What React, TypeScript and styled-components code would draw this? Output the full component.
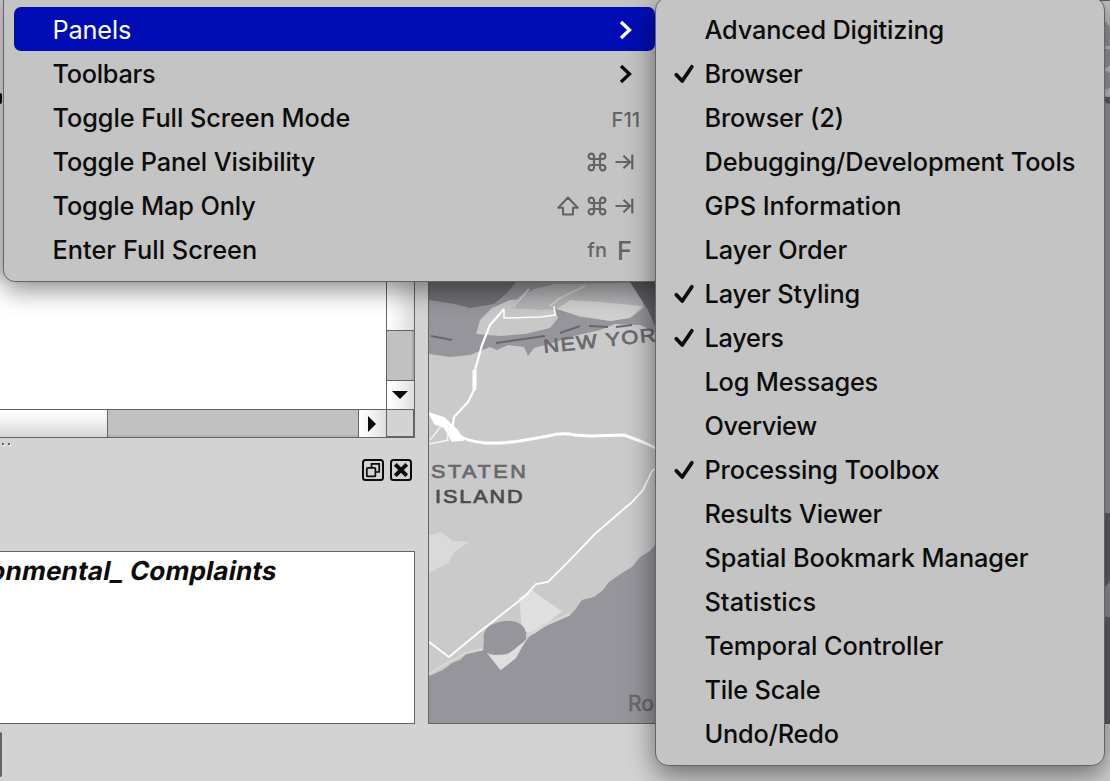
import React from 'react';
import styled, { createGlobalStyle } from 'styled-components';

const GlobalStyle = createGlobalStyle`
  * { box-sizing: border-box; }
  body { margin: 0; background: #d3d3d3; font-family: Inter, "Liberation Sans", sans-serif; }
`;

const Page = styled.div`
  position: relative;
  display: flex;
  width: 1110px;
  height: 781px;
  overflow: hidden;
  background: #d3d3d3;
`;

const Dock = styled.div`
  display: flex;
  flex-direction: column;
  width: 415px;
  margin-right: 13px;
`;

const TreePanel = styled.div`
  display: grid;
  grid-template-columns: 386px 29px;
  grid-template-rows: 409px 28px;
  height: 438px;
  border-bottom: 1px solid #646464;
`;

const TreeBody = styled.div`
  padding-top: 93px;
  background: linear-gradient(#dcdcdc 270px, #fff 285px);
`;

const ScrollNub = styled.div`
  width: 2px;
  height: 11px;
  border-radius: 0 2px 2px 0;
  background: #0c0c0c;
`;

const VerticalBar = styled.div`
  display: flex;
  flex-direction: column;
  border-left: 1px solid #646464;
  border-right: 1px solid #646464;
`;

const VerticalTrack = styled.div`
  height: 330px;
  background: linear-gradient(90deg, #fff, #ebebeb 60%, #dadada);
`;

const VerticalThumb = styled.div`
  height: 51px;
  border: solid #646464;
  border-width: 1px 0;
  background: #c1c1c1;
  box-shadow: inset -2px 0 0 #aaa;
`;

const ArrowButton = styled.div<{ $width?: number }>`
  display: flex;
  flex: ${(p) => (p.$width ? 'none' : 1)};
  width: ${(p) => (p.$width ? `${p.$width}px` : 'auto')};
  align-items: center;
  justify-content: center;
  padding-right: 2px;
  background: linear-gradient(90deg, #fff, #f2f2f2 50%, #dedede);
`;

const HorizontalBar = styled.div`
  display: flex;
  border-top: 1px solid #646464;
`;

const HorizontalTrack = styled.div`
  width: 107px;
  background: linear-gradient(#fff, #f0f0f0 45%, #d6d6d6);
`;

const HorizontalThumb = styled.div`
  width: 252px;
  border: solid #646464;
  border-width: 0 1px;
  background: #c1c1c1;
  box-shadow: inset 0 -2px 0 #b2b2b2;
`;

const Corner = styled.div`
  border: 1px solid #646464;
  border-right-width: 2px;
  background: #d3d3d3;
`;

const Grip = styled.div`
  display: flex;
  gap: 4px;
  height: 21px;
  padding: 5px 0 0 2px;
`;

const GripDot = styled.span`
  width: 2px;
  height: 2px;
  background: #646464;
  box-shadow: 1px 1px 0 #fff;
`;

const DockTitle = styled.div`
  display: flex;
  justify-content: flex-end;
  gap: 6px;
  height: 92px;
  padding-right: 3px;
`;

const LayerList = styled.div`
  height: 173px;
  overflow: hidden;
  border: 1px solid #646464;
  border-left: 0;
  background: #fff;
`;

const LayerName = styled.div`
  margin: 3px 0 0 -12px;
  color: #0c0c0c;
  font-size: 26px;
  font-weight: 700;
  line-height: 32px;
  letter-spacing: 0.22px;
  white-space: pre;
  transform: skewX(-11deg);
  transform-origin: 0 80%;
`;

const SideButton = styled.div`
  width: 2px;
  height: 45px;
  margin-top: 8px;
  border-radius: 0 2px 2px 0;
  background: #646464;
`;

const MapFrame = styled.div`
  flex: 1;
  height: 724px;
  border: 1px solid #646464;
  border-right: 0;

  svg { display: block; }
`;

const Menu = styled.div`
  position: absolute;
  border: 1px solid #646464;
  background: #c4c4c4;
`;

const ViewMenu = styled(Menu)`
  top: -20px;
  left: 3px;
  width: 663px;
  height: 302px;
  padding: 26px 10px 0;
  border-radius: 12px;
  box-shadow: 0 9px 24px rgba(0, 0, 0, 0.42);
`;

const PanelsMenu = styled(Menu)`
  top: -3px;
  left: 655px;
  width: 450px;
  height: 769px;
  padding: 9px 10px 0;
  border-radius: 13px;
  box-shadow: 0 9px 28px rgba(0, 0, 0, 0.5);
`;

const Item = styled.div<{ $active?: boolean }>`
  display: flex;
  align-items: center;
  width: 641px;
  height: 44px;
  padding: 2px 20px 0 38.5px;
  border-radius: 7px;
  background: ${(p) => (p.$active ? '#000db4' : 'transparent')};
  color: ${(p) => (p.$active ? '#fff' : '#0c0c0c')};
  font-weight: ${(p) => (p.$active ? 430 : 500)};
`;

const PanelItem = styled.div`
  display: flex;
  align-items: center;
  height: 44px;
  padding-top: 2px;
  color: #0c0c0c;
  font-weight: 500;
`;

const CheckSlot = styled.span`
  display: flex;
  width: 38.5px;
  padding-left: 7px;
`;

const Label = styled.span<{ $tracking?: number }>`
  font-size: 25.3px;
  line-height: 42px;
  letter-spacing: ${(p) => p.$tracking ?? 0}px;
  white-space: nowrap;
`;

const Shortcut = styled.span`
  display: flex;
  align-items: center;
  gap: 8px;
  margin-left: auto;
  color: #646464;
`;

const FunctionKey = styled.span`
  margin-right: -5px;
  padding-top: 3px;
  font-size: 20px;
`;

const ModifierKey = styled.span`
  font-size: 20px;
`;

const LetterKey = styled.span`
  padding: 0 3px 0 2px;
  font-size: 25.5px;
`;

const Arrow = styled.span`
  display: flex;
  margin-left: auto;
  padding-right: 2px;
`;

const Chevron = () => (
  <Arrow>
    <svg width="14" height="20" viewBox="0 0 14 20" fill="none" stroke="currentColor" strokeWidth="3.3">
      <path d="M2 2 10.5 10 2 18" />
    </svg>
  </Arrow>
);

const Check = () => (
  <svg width="22" height="20" viewBox="0 0 22 20" fill="none" stroke="currentColor" strokeWidth="3.8" strokeLinecap="round" strokeLinejoin="round">
    <path d="M3.3 10.8 9.2 17 18.9 2.8" />
  </svg>
);

const CommandKey = () => (
  <svg width="20" height="20" viewBox="0 0 20 20" fill="none" stroke="currentColor" strokeWidth="2.2">
    <path d="M7 7V4.4A2.7 2.7 0 1 0 4.4 7H15.6A2.7 2.7 0 1 0 13 4.4V15.6A2.7 2.7 0 1 0 15.6 13H4.4A2.7 2.7 0 1 0 7 15.6V7" />
  </svg>
);

const TabKey = () => (
  <svg width="20" height="20" viewBox="0 0 20 20" fill="none" stroke="currentColor" strokeWidth="2.2">
    <path d="M0.5 10H15M8.5 3.8 15 10 8.5 16.2M17.3 2.5V17.5" />
  </svg>
);

const ShiftKey = () => (
  <svg width="22" height="20" viewBox="0 0 22 20" fill="none" stroke="currentColor" strokeWidth="2.1" strokeLinejoin="round">
    <path d="M11 1.5 20.7 11.8H16V18.5H6V11.8H1.3Z" />
  </svg>
);

const FloatIcon = () => (
  <svg width="22" height="22" viewBox="0 0 22 22" fill="none" stroke="#0c0c0c" strokeWidth="2">
    <rect x="1" y="1" width="20" height="20" rx="2.5" />
    <g strokeWidth="1.7">
      <path d="M9.5 8V4.8H17.2V13H14" />
      <rect x="4.8" y="8.8" width="8.6" height="8.6" rx="1" />
    </g>
  </svg>
);

const CloseIcon = () => (
  <svg width="22" height="22" viewBox="0 0 22 22" fill="none" stroke="#0c0c0c" strokeWidth="2">
    <rect x="1" y="1" width="20" height="20" rx="2.5" />
    <path d="M5.3 5.3 16.7 16.7M16.7 5.3 5.3 16.7" strokeWidth="4" />
  </svg>
);

const CityMap = () => (
  <svg width="681" height="722" viewBox="429 1 681 722">
    <rect x="429" y="0" width="681" height="723" fill="#cacaca" />
    <path d="M429 270H656V332L640 325 615 324 600 330 570 337 556 342 545 345 534 348 528 356 524 347 508 345 497 350 490 347 470 355 450 357 429 354Z" fill="#95959b" />
    <path d="M429 282H516L507 293 494 304 470 308 455 304 429 300Z" fill="#717174" />
    <path d="M476 334 480 320 492 308 510 300 545 297 554 306 558 318 550 328 525 334 500 336Z" fill="#c8c8c8" />
    <path d="M511 308 520 296 535 289 555 284 632 283 642 298 644 308 632 317 612 321 580 317 557 309 540 310Z" fill="#b4b4b7" />
    <path d="M557 309 570 300 600 302 643 306 630 318 610 321 580 316Z" fill="#d0d0d0" />
    <path d="M630 282H656V328L648 310Z" fill="#66666a" />
    <path d="M431 336 452 340M496 343 545 336M560 333 580 326M589 326 608 327M616 327 632 325" fill="none" stroke="#68686c" strokeWidth="1.9" />
    <path d="M513 307 529 289M550 306 560 298 585 286" fill="none" stroke="#d0d0d0" strokeWidth="1.8" />
    <path d="M504 309V318L540 317 555 315 554 306" fill="none" stroke="#fff" strokeWidth="1.5" />
    <path d="M504 309 490 325 482 345 475 370V388L468 402 454 417 452 432" fill="none" stroke="#fff" strokeWidth="2.2" strokeLinejoin="round" />
    <path d="M474.5 370V390" stroke="#fff" strokeWidth="4" />
    <path d="M429 413 444 418 457 430 463 440 452 441 444 427 435 424Z" fill="#fff" stroke="#fff" strokeWidth="1.5" />
    <path d="M442 425 430 440M429 444 449 440M449 425 447 440" fill="none" stroke="#f4f4f4" strokeWidth="1.3" />
    <path d="M455 433Q464 441 485 443 502 443.500 520 441L548 436Q562 432 575 435L590 436 624 435 640 441 656 448" fill="none" stroke="#fff" strokeWidth="3" />
    <path d="M429 535 441 532 453 541 469 542 454 552 448 563 429 573Z" fill="#dadada" />
    <path d="M519 598 532 590 545 600 562 611 550 621 534 634 522 631Z" fill="#e0e0e0" />
    <path d="M656 544 650 551 640 557 632 567 622 573 609 582 603 590 594 597 582 600 575 610 570 615 556 619 543 628 529 637 519 651 500 670 490 657 484 650 467 653 460 660 452 663 443 670 429 676V723H1110V530H656Z" fill="#95959b" />
    <path d="M484 640C482 628 493 621 509 621 523 621 528 631 526 639 519 651 507 655 495 655L483 652Z" fill="#95959b" />
    <path d="M489 655 507 655 526 640 516 658 501 670Z" fill="#dedede" />
    <path d="M429 674 449 662 466 653 483 649M526 636 545 625 570 614" fill="none" stroke="#d6d6d6" strokeWidth="2.5" />
    <path d="M429 642 449 657 478 633 505 612 525 596 536 584 548 582 570 560 596 533 632 502 643 490 652 471 656 468" fill="none" stroke="#fff" strokeWidth="1.8" />
    <path d="M1100 0H1110V513H1100Z" fill="#9d9da2" />
    <path d="M1100 0H1110V26L1104 20Z" fill="#c4c4c4" />
    <path d="M1104 46H1110V49H1104ZM1104 68 1110 66V73L1104 70ZM1104 90 1110 88V97L1104 96Z" fill="#c6c6c6" />
    <path d="M1104 97H1110V104L1106 103Z" fill="#646464" />
    <path d="M1104 513H1110V581L1104 588ZM1104 617H1110V723H1104Z" fill="#646468" />
    <g fontFamily="'Liberation Sans', sans-serif" fill="#69696d" stroke="#69696d" strokeWidth=".7">
      <g transform="translate(431 478) scale(1.2 1)">
        <text fontSize="18" textLength="79">STATEN</text>
      </g>
      <g transform="translate(435 503) scale(1.2 1)" fill="#4c4c50" stroke="#4c4c50">
        <text fontSize="18" textLength="73">ISLAND</text>
      </g>
      <g transform="translate(544 353) rotate(-6) scale(1.15 1)">
        <text fontSize="19" textLength="112">NEW YORK</text>
      </g>
      <text x="628" y="711" fontSize="21" fontFamily="Inter, sans-serif">Ro</text>
    </g>
  </svg>
);

type Entry = { name: string; tracking: number; checked?: boolean };

const panels: Entry[] = [
  { name: 'Advanced Digitizing', tracking: -0.15 },
  { name: 'Browser', tracking: -0.3, checked: true },
  { name: 'Browser (2)', tracking: -0.15 },
  { name: 'Debugging/Development Tools', tracking: -0.11 },
  { name: 'GPS Information', tracking: 0 },
  { name: 'Layer Order', tracking: 0 },
  { name: 'Layer Styling', tracking: -0.15, checked: true },
  { name: 'Layers', tracking: -0.25, checked: true },
  { name: 'Log Messages', tracking: -0.18 },
  { name: 'Overview', tracking: -0.3 },
  { name: 'Processing Toolbox', tracking: -0.14, checked: true },
  { name: 'Results Viewer', tracking: -0.1 },
  { name: 'Spatial Bookmark Manager', tracking: -0.07 },
  { name: 'Statistics', tracking: 0.03 },
  { name: 'Temporal Controller', tracking: -0.04 },
  { name: 'Tile Scale', tracking: -0.18 },
  { name: 'Undo/Redo', tracking: -0.2 },
];

export default function App() {
  return (
    <Page>
      <GlobalStyle />
      <Dock>
        <TreePanel>
          <TreeBody><ScrollNub /></TreeBody>
          <VerticalBar>
            <VerticalTrack />
            <VerticalThumb />
            <ArrowButton>
              <svg width="16" height="8" viewBox="0 0 16 8"><path d="M0 0H16L8 8Z" fill="#0c0c0c" /></svg>
            </ArrowButton>
          </VerticalBar>
          <HorizontalBar>
            <HorizontalTrack />
            <HorizontalThumb />
            <ArrowButton $width={27}>
              <svg width="8" height="16" viewBox="0 0 8 16"><path d="M0 0V16L8 8Z" fill="#0c0c0c" /></svg>
            </ArrowButton>
          </HorizontalBar>
          <Corner />
        </TreePanel>
        <Grip><GripDot /><GripDot /></Grip>
        <DockTitle><FloatIcon /><CloseIcon /></DockTitle>
        <LayerList><LayerName>onmental_ Complaints</LayerName></LayerList>
        <SideButton />
      </Dock>
      <MapFrame><CityMap /></MapFrame>

      <ViewMenu>
        <Item $active>
          <Label $tracking={-0.15}>Panels</Label>
          <Chevron />
        </Item>
        <Item>
          <Label $tracking={-0.28}>Toolbars</Label>
          <Chevron />
        </Item>
        <Item>
          <Label $tracking={-0.04}>Toggle Full Screen Mode</Label>
          <Shortcut><FunctionKey>F11</FunctionKey></Shortcut>
        </Item>
        <Item>
          <Label $tracking={-0.13}>Toggle Panel Visibility</Label>
          <Shortcut><CommandKey /><TabKey /></Shortcut>
        </Item>
        <Item>
          <Label $tracking={-0.1}>Toggle Map Only</Label>
          <Shortcut><ShiftKey /><CommandKey /><TabKey /></Shortcut>
        </Item>
        <Item>
          <Label $tracking={0.03}>Enter Full Screen</Label>
          <Shortcut><ModifierKey>fn</ModifierKey><LetterKey>F</LetterKey></Shortcut>
        </Item>
      </ViewMenu>

      <PanelsMenu>
        {panels.map((panel) => (
          <PanelItem key={panel.name}>
            <CheckSlot>{panel.checked && <Check />}</CheckSlot>
            <Label $tracking={panel.tracking}>{panel.name}</Label>
          </PanelItem>
        ))}
      </PanelsMenu>
    </Page>
  );
}
